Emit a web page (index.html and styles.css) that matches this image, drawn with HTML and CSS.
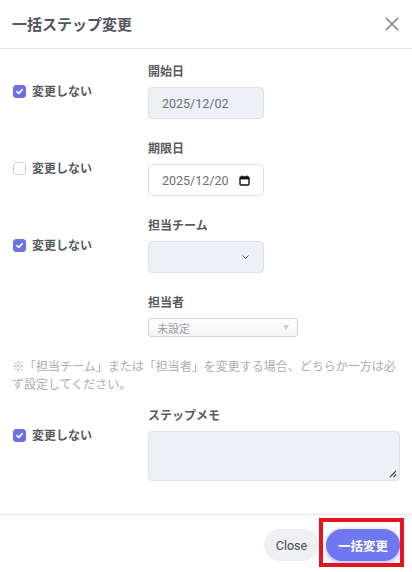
FILE: index.html
```html
<!DOCTYPE html>
<html lang="ja">
<head>
<meta charset="utf-8">
<title>一括ステップ変更</title>
<link rel="stylesheet" href="styles.css">
</head>
<body>
<div class="modal">
  <header class="modal-header">
    <h2 class="modal-title">一括ステップ変更</h2>
    <button class="close-x" aria-label="閉じる">
      <svg width="14" height="14" viewBox="0 0 14 14"><path d="M1 1L13 13M13 1L1 13" stroke="#7a7f86" stroke-width="1.5" fill="none"/></svg>
    </button>
  </header>

  <div class="modal-body">
    <div class="row">
      <label class="keep">
        <span class="cb cb-on"><svg width="9" height="9" viewBox="0 0 9 9"><path d="M1.8 4.7L3.7 6.4L7.2 2.6" stroke="#fff" stroke-width="1.6" fill="none" stroke-linecap="round" stroke-linejoin="round"/></svg></span>
        変更しない
      </label>
      <div class="field">
        <div class="field-label">開始日</div>
        <div class="input input-disabled">2025/12/02</div>
      </div>
    </div>

    <div class="row">
      <label class="keep">
        <span class="cb"></span>
        変更しない
      </label>
      <div class="field">
        <div class="field-label">期限日</div>
        <div class="input input-date">
          <span>2025/12/20</span>
          <svg class="cal" width="11" height="11" viewBox="0 0 11 11"><rect x="1" y="2" width="9" height="8" rx="1" fill="none" stroke="#111" stroke-width="1.4"/><rect x="1" y="2" width="9" height="2.4" fill="#111"/><path d="M3 0.5V2.5M8 0.5V2.5" stroke="#111" stroke-width="1.2"/></svg>
        </div>
      </div>
    </div>

    <div class="row">
      <label class="keep">
        <span class="cb cb-on"><svg width="9" height="9" viewBox="0 0 9 9"><path d="M1.8 4.7L3.7 6.4L7.2 2.6" stroke="#fff" stroke-width="1.6" fill="none" stroke-linecap="round" stroke-linejoin="round"/></svg></span>
        変更しない
      </label>
      <div class="field">
        <div class="field-label">担当チーム</div>
        <div class="input input-select">
          <svg width="9" height="6" viewBox="0 0 9 6"><path d="M1.5 1.5L4.5 4.5L7.5 1.5" stroke="#555" stroke-width="1" fill="none"/></svg>
        </div>
      </div>
    </div>

    <div class="row row-plain">
      <div></div>
      <div class="field">
        <div class="field-label">担当者</div>
        <div class="mini-select">
          <span>未設定</span>
          <span class="tri"></span>
        </div>
      </div>
    </div>

    <p class="note">※「担当チーム」または「担当者」を変更する場合、どちらか一方は必ず設定してください。</p>

    <div class="row">
      <label class="keep">
        <span class="cb cb-on"><svg width="9" height="9" viewBox="0 0 9 9"><path d="M1.8 4.7L3.7 6.4L7.2 2.6" stroke="#fff" stroke-width="1.6" fill="none" stroke-linecap="round" stroke-linejoin="round"/></svg></span>
        変更しない
      </label>
      <div class="field">
        <div class="field-label">ステップメモ</div>
        <div class="textarea">
          <svg class="grip" width="9" height="9" viewBox="0 0 9 9"><path d="M8 2L2 8M8 5.5L5.5 8" stroke="#444" stroke-width="1.2"/></svg>
        </div>
      </div>
    </div>
  </div>

  <footer class="modal-footer">
    <button class="btn btn-light">Close</button>
    <div class="highlight-wrap">
      <button class="btn btn-primary">一括変更</button>
      <span class="highlight"></span>
    </div>
  </footer>
</div>
</body>
</html>
```

FILE: styles.css
```css
* { box-sizing: border-box; }
html, body {
  margin: 0;
  padding: 0;
  background: #fff;
}
body {
  font-family: "Noto Sans CJK JP", "Noto Sans", sans-serif;
  color: #50555c;
}
.modal {
  width: 412px;
  height: 572px;
  display: flex;
  flex-direction: column;
}
.modal-header {
  height: 49px;
  display: flex;
  align-items: center;
  justify-content: space-between;
  padding: 0 8px 0 12px;
  border-bottom: 1px solid #e3e6ea;
}
.modal-title {
  margin: 0;
  font-size: 15px;
  font-weight: 700;
  color: #52575e;
  line-height: 20px;
}
.close-x {
  border: 0;
  background: none;
  padding: 2px;
  width: 24px;
  height: 24px;
  display: flex;
  align-items: center;
  justify-content: center;
}
.modal-body {
  flex: 1;
  padding: 13px 12px 0 12px;
  display: flex;
  flex-direction: column;
  gap: 20px;
}
.row {
  display: grid;
  grid-template-columns: 136px 1fr;
}
.keep {
  display: flex;
  align-items: center;
  gap: 6px;
  padding-top: 20px;
  height: 38px;
  font-size: 12px;
  font-weight: 700;
  color: #575c63;
  line-height: 18px;
  padding-left: 1px;
}
.cb {
  width: 13px;
  height: 13px;
  border-radius: 3px;
  border: 1px solid #cfd3d8;
  background: #fff;
  display: flex;
  align-items: center;
  justify-content: center;
  flex: none;
}
.cb-on {
  background: #6c71ea;
  border-color: #6c71ea;
}
.field {
  display: flex;
  flex-direction: column;
}
.field-label {
  font-size: 12px;
  font-weight: 700;
  line-height: 18px;
  color: #575c63;
  margin-bottom: 7px;
}
.input {
  width: 116px;
  height: 32px;
  border: 1px solid #dde1e6;
  border-radius: 4px;
  background: #fff;
  font-family: Roboto, "Noto Sans", sans-serif;
  font-size: 12.5px;
  color: #6b7078;
  display: flex;
  align-items: center;
  padding: 0 13px;
}
.input-disabled {
  background: #edf0f4;
}
.input-date {
  justify-content: space-between;
  padding-right: 13px;
}
.cal { margin-top: 1px; }
.input-select {
  background: #edf0f4;
  justify-content: flex-end;
  padding-right: 13px;
}
.mini-select {
  width: 150px;
  height: 19px;
  border: 1px solid #cfd2d6;
  border-radius: 3px;
  background: linear-gradient(#ffffff, #f4f4f4);
  display: flex;
  align-items: center;
  justify-content: space-between;
  padding: 0 8px 0 8px;
  font-size: 11px;
  color: #9a9ea4;
  line-height: 16px;
}
.tri {
  width: 0;
  height: 0;
  border-left: 3px solid transparent;
  border-right: 3px solid transparent;
  border-top: 5px solid #cdd0d4;
}
.note {
  margin: 0 0 -7px 0;
  font-size: 12px;
  line-height: 18px;
  color: #a9aeb5;
}
.textarea {
  position: relative;
  width: 252px;
  height: 50px;
  border: 1px solid #dde1e6;
  border-radius: 4px;
  background: #edf0f4;
}
.grip {
  position: absolute;
  right: 2px;
  bottom: 2px;
}
.modal-footer {
  border-top: 1px solid #e3e6ea;
  height: 58px;
  display: flex;
  align-items: flex-start;
  justify-content: flex-end;
  gap: 7px;
  padding: 14px 12px 0 0;
}
.btn {
  height: 32px;
  border: 0;
  border-radius: 16px;
  font-family: "Noto Sans CJK JP", "Noto Sans", sans-serif;
  font-size: 12.5px;
  padding: 0;
  cursor: pointer;
}
.btn-light {
  width: 55px;
  background: #eef0f4;
  color: #464b52;
  font-family: Roboto, "Noto Sans", sans-serif;
}
.btn-primary {
  width: 74px;
  background: #6f78f2;
  color: #fff;
  font-weight: 700;
  box-shadow: 0 2px 6px rgba(90, 100, 230, 0.45);
}
.highlight-wrap {
  position: relative;
  display: flex;
}
.highlight {
  position: absolute;
  left: -7px;
  top: -11px;
  width: 85px;
  height: 49px;
  border: 4px solid #e3141b;
  pointer-events: none;
}
```
